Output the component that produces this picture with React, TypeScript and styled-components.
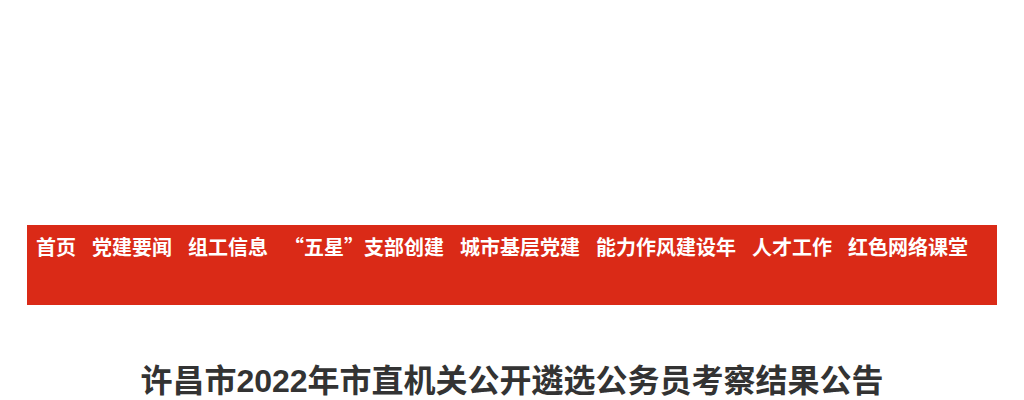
import React from 'react';
import styled, {createGlobalStyle} from 'styled-components';

const GlobalStyle = createGlobalStyle`
  html, body {
    margin: 0;
    padding: 0;
    background: #ffffff;
    font-family: "Liberation Sans", "Noto Sans CJK SC", sans-serif;
  }
`;

const Page = styled.div`
  width: 970px;
  margin: 0 auto;
`;

const Banner = styled.div`
  height: 225px;
`;

const Nav = styled.ul`
  list-style: none;
  margin: 0;
  padding: 0 0 0 9px;
  height: 80px;
  background-color: #da2a17;
  display: flex;
  flex-direction: row;
  align-items: flex-start;
`;

const NavItem = styled.li`
  line-height: 44px;
  margin-right: 16px;
  font-family: "Noto Sans CJK SC", sans-serif;
  font-feature-settings: "fwid";
  font-size: 20px;
  font-weight: bold;
  color: #ffffff;
  white-space: nowrap;
`;

const Title = styled.h1`
  margin: 56px 0 0;
  text-align: center;
  font-size: 32px;
  line-height: 40px;
  font-weight: bold;
  color: #333333;
`;

const navItems = [
  '首页',
  '党建要闻',
  '组工信息',
  '“五星”支部创建',
  '城市基层党建',
  '能力作风建设年',
  '人才工作',
  '红色网络课堂',
];

const App = () => {
  return (
    <>
      <GlobalStyle/>
      <Page>
        <Banner/>
        <Nav>
          {navItems.map(item => <NavItem key={item}>{item}</NavItem>)}
        </Nav>
        <Title>许昌市2022年市直机关公开遴选公务员考察结果公告</Title>
      </Page>
    </>
  );
};

export default App;
